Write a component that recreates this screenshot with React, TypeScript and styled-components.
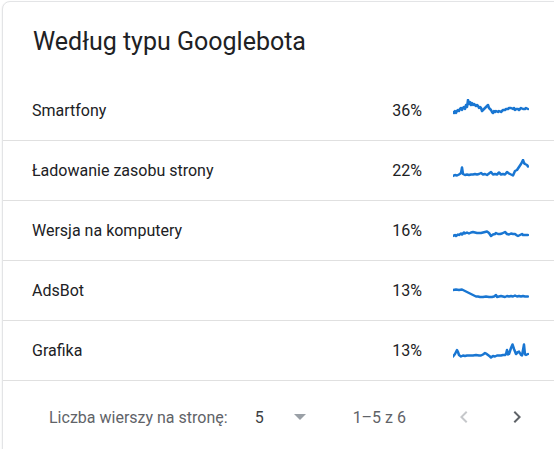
import styled, { createGlobalStyle } from "styled-components";

const GlobalStyle = createGlobalStyle`
  body {
    margin: 0;
    background: #ffffff;
    overflow: hidden;
    font-family: Roboto, "Noto Sans", Arial, sans-serif;
  }
`;

type BotRow = {
  name: string;
  share: string;
  points: string;
};

const rows: BotRow[] = [
  {
    name: "Smartfony",
    share: "36%",
    points:
      "0,13 1,14 2,12 3,14 4,12 5,11 6,12 7,10 8,9 9,11 10,9 11,8 12,10 13,6 14,8 15,1 16,5 17,3 18,6 19,4 20,6 21,5 22,6 23,7 24,6 25,7 26,9 27,8 28,9 29,12 30,11 31,10 33,8 35,6 36,9 38,11 39,13 40,14 41,12 42,13 43,12 45,13 46,12 48,13 50,11 52,11 53,10 55,10 56,9 58,9 60,10 61,9 62,11 63,10 65,10 66,11 68,9 70,10 72,10 73,9 75,10",
  },
  {
    name: "Ładowanie zasobu strony",
    share: "22%",
    points:
      "0,17 2,16 4,16.5 6,15.5 8,14 9,8.5 10,15 12,16 14,15.5 16,16 18,15.5 20,15.5 22,15 24,15.5 26,15 28,14 30,15.5 32,15 34,16 36,14.5 38,13 40,15.5 42,15 44,15.5 46,13.5 48,15.5 50,15 52,15.5 54,13 56,14.5 58,15.5 60,16.5 62,12 64,11 66,8 68,5 70,1 71,4 72,5 74,6 75,7.5",
  },
  {
    name: "Wersja na komputery",
    share: "16%",
    points:
      "0,17 2,16 3,17 5,15.5 6,16 8,14.5 9,15.5 11,13.5 12,14.5 14,13.5 16,14.5 18,13.5 20,13 22,13.5 24,14 26,14 28,14 30,13.5 32,13 34,12.5 36,14 38,17 40,15.5 42,15 43,14 45,15 47,15 49,14.5 51,13.5 52,13 54,15 56,15.5 58,14.5 60,15 62,15 64,16.5 65,17 67,16 69,15 70,16 72,16 74,16 75,16",
  },
  {
    name: "AdsBot",
    share: "13%",
    points:
      "0,11 3,10.5 6,11 9,10.5 11,11.5 13,12.5 15,13.5 17,14.5 19,15.5 21,16.5 23,17.5 25,17.5 27,18 30,18 33,17.5 36,18 39,18 41,17.5 43,16 44,18 46,17.5 48,17 50,17.5 52,18 54,17 56,17.5 58,17 60,17.5 62,16.5 64,17.5 66,17 68,17.5 70,17 72,17.5 75,17.5",
  },
  {
    name: "Grafika",
    share: "13%",
    points:
      "0,17.5 2,15 4,11 5,13 6,16 8,17.5 10,16.5 12,17 14,16.5 17,16.5 20,16.5 23,16 26,16.5 28,16.5 30,15.5 32,14 33,14.5 35,16 37,17.5 38,18.5 40,17 42,17.5 44,16.5 46,16.5 48,16.5 50,16 52,16 53,15 54,11 55,15.5 56,15 58,9 59.5,5.5 61,10 63,15 65,13 66,12.5 68,16 69,16.5 70,11 71,5.5 72,15.5 73,16 75,15",
  },
];

const Sparkline = ({ points }: { points: string }) => (
  <SparkSvg viewBox="0 0 76 24" width="76" height="24">
    <polyline
      points={points}
      fill="none"
      stroke="#1976d2"
      strokeWidth="2.5"
      strokeLinejoin="round"
      strokeLinecap="round"
    />
  </SparkSvg>
);

const ChevronLeft = () => (
  <svg viewBox="0 0 24 24" width="24" height="24">
    <path d="M15.41 7.41L14 6l-6 6 6 6 1.41-1.41L10.83 12z" fill="currentColor" />
  </svg>
);

const ChevronRight = () => (
  <svg viewBox="0 0 24 24" width="24" height="24">
    <path d="M10 6L8.59 7.41 13.17 12l-4.58 4.59L10 18l6-6z" fill="currentColor" />
  </svg>
);

export default function App() {
  return (
    <>
      <GlobalStyle />
      <Card>
        <Header>
          <Title>Według typu Googlebota</Title>
        </Header>
        {rows.map((row) => (
          <Row key={row.name}>
            <Name>{row.name}</Name>
            <Share>{row.share}</Share>
            <Sparkline points={row.points} />
          </Row>
        ))}
        <Footer>
          <PageLabel>Liczba wierszy na stronę:</PageLabel>
          <PageSelect>
            <SelectValue>5</SelectValue>
            <SelectArrow />
          </PageSelect>
          <RangeLabel>1–5 z 6</RangeLabel>
          <NavButton disabled>
            <ChevronLeft />
          </NavButton>
          <NavButton $gap>
            <ChevronRight />
          </NavButton>
        </Footer>
      </Card>
    </>
  );
}

const Card = styled.div`
  margin: 1px 0 0 2px;
  width: 580px;
  height: 480px;
  background: #ffffff;
  border: 1px solid #e3e4e6;
  border-radius: 8px;
  box-sizing: border-box;
  box-shadow: 0 1px 2px rgba(60, 64, 67, 0.12);
  color: #202124;
`;

const Header = styled.div`
  padding: 24px 0 23px 30px;
`;

const Title = styled.h2`
  margin: 0;
  font-size: 25px;
  line-height: 32px;
  font-weight: 400;
  color: #202124;
`;

const Row = styled.div`
  display: flex;
  align-items: center;
  height: 59px;
  padding: 0 52px 0 29px;
  border-bottom: 1px solid #e0e0e0;
  font-size: 16px;
  color: #202124;
`;

const Name = styled.div`
  flex: 1;
`;

const Share = styled.div`
  width: 60px;
  text-align: right;
`;

const SparkSvg = styled.svg`
  display: block;
  margin-left: 31px;
`;

const Footer = styled.div`
  display: flex;
  align-items: center;
  height: 66px;
  padding: 3px 0 0 46px;
  font-size: 16px;
  color: #5f6368;
`;

const PageLabel = styled.span``;

const PageSelect = styled.div`
  display: flex;
  align-items: center;
  margin-left: 27px;
  width: 51px;
  justify-content: space-between;
`;

const SelectValue = styled.span`
  color: #3c4043;
`;

const SelectArrow = styled.span`
  width: 0;
  height: 0;
  border-left: 6.5px solid transparent;
  border-right: 6.5px solid transparent;
  border-top: 6px solid #9aa0a6;
`;

const RangeLabel = styled.span`
  margin-left: 47px;
`;

const NavButton = styled.button<{ $gap?: boolean }>`
  display: flex;
  align-items: center;
  justify-content: center;
  width: 24px;
  height: 24px;
  padding: 0;
  border: none;
  background: none;
  margin-left: ${(p) => (p.$gap ? "29px" : "46px")};
  color: ${(p) => (p.disabled ? "#c6c8cb" : "#5f6368")};
`;
